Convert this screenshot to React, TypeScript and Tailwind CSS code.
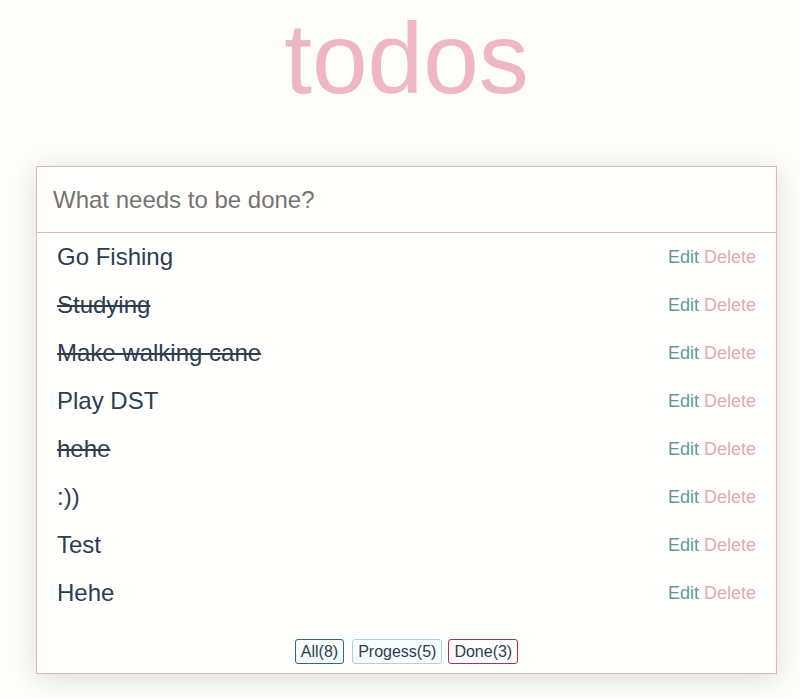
import React from "react";

const todos = [
  { text: "Go Fishing", done: false },
  { text: "Studying", done: true },
  { text: "Make walking cane", done: true },
  { text: "Play DST", done: false },
  { text: "hehe", done: true },
  { text: ":))", done: false },
  { text: "Test", done: false },
  { text: "Hehe", done: false },
];

export default function App() {
  return (
    <div
      className="min-h-[698px] w-full bg-[#fdfdfb] text-[#2c3e50]"
      style={{ fontFamily: '"Liberation Sans", Arial, sans-serif' }}
    >
      <div className="ml-[36px] w-[741px]">
        <h1 className="pt-[8px] text-center text-[100px] leading-[100px] font-normal text-[#efb6c4]">
          todos
        </h1>
        <div className="mt-[58px] border border-[#dfb6bc] bg-[#fffffd] shadow-[0_4px_26px_rgba(0,0,0,0.13)]">
          <div className="flex h-[66px] items-center border-b border-[#dfb6bc] px-[16px]">
            <input
              className="w-full bg-transparent text-[24px] text-[#2c3e50] outline-none placeholder:text-[#777370]"
              placeholder="What needs to be done?"
            />
          </div>
          <ul>
            {todos.map((t, i) => (
              <li
                key={i}
                className="flex h-[48px] items-center justify-between px-[20px]"
              >
                <span
                  className={
                    "text-[24px] leading-[28px] " +
                    (t.done ? "line-through decoration-[1.5px]" : "")
                  }
                >
                  {t.text}
                </span>
                <span className="text-[18px]">
                  <span className="text-[#5f9a9c]">Edit</span>{" "}
                  <span className="text-[#eba5b8]">Delete</span>
                </span>
              </li>
            ))}
          </ul>
          <div className="flex h-[56px] items-start justify-center pt-[22px]">
            <button className="h-[25px] rounded-[3px] border border-[#2d6e75] bg-[#f6fbfb] px-[5px] text-[16px] leading-[22px] text-[#2c3e50]">
              All(8)
            </button>
            <button className="ml-[8px] h-[25px] rounded-[3px] border border-[#a9d3de] bg-[#f7fcfd] px-[5px] text-[16px] leading-[22px] text-[#2c3e50]">
              Progess(5)
            </button>
            <button className="ml-[6px] h-[25px] rounded-[3px] border border-[#a4354f] bg-[#fffdfd] px-[5px] text-[16px] leading-[22px] text-[#2c3e50]">
              Done(3)
            </button>
          </div>
        </div>
      </div>
    </div>
  );
}
